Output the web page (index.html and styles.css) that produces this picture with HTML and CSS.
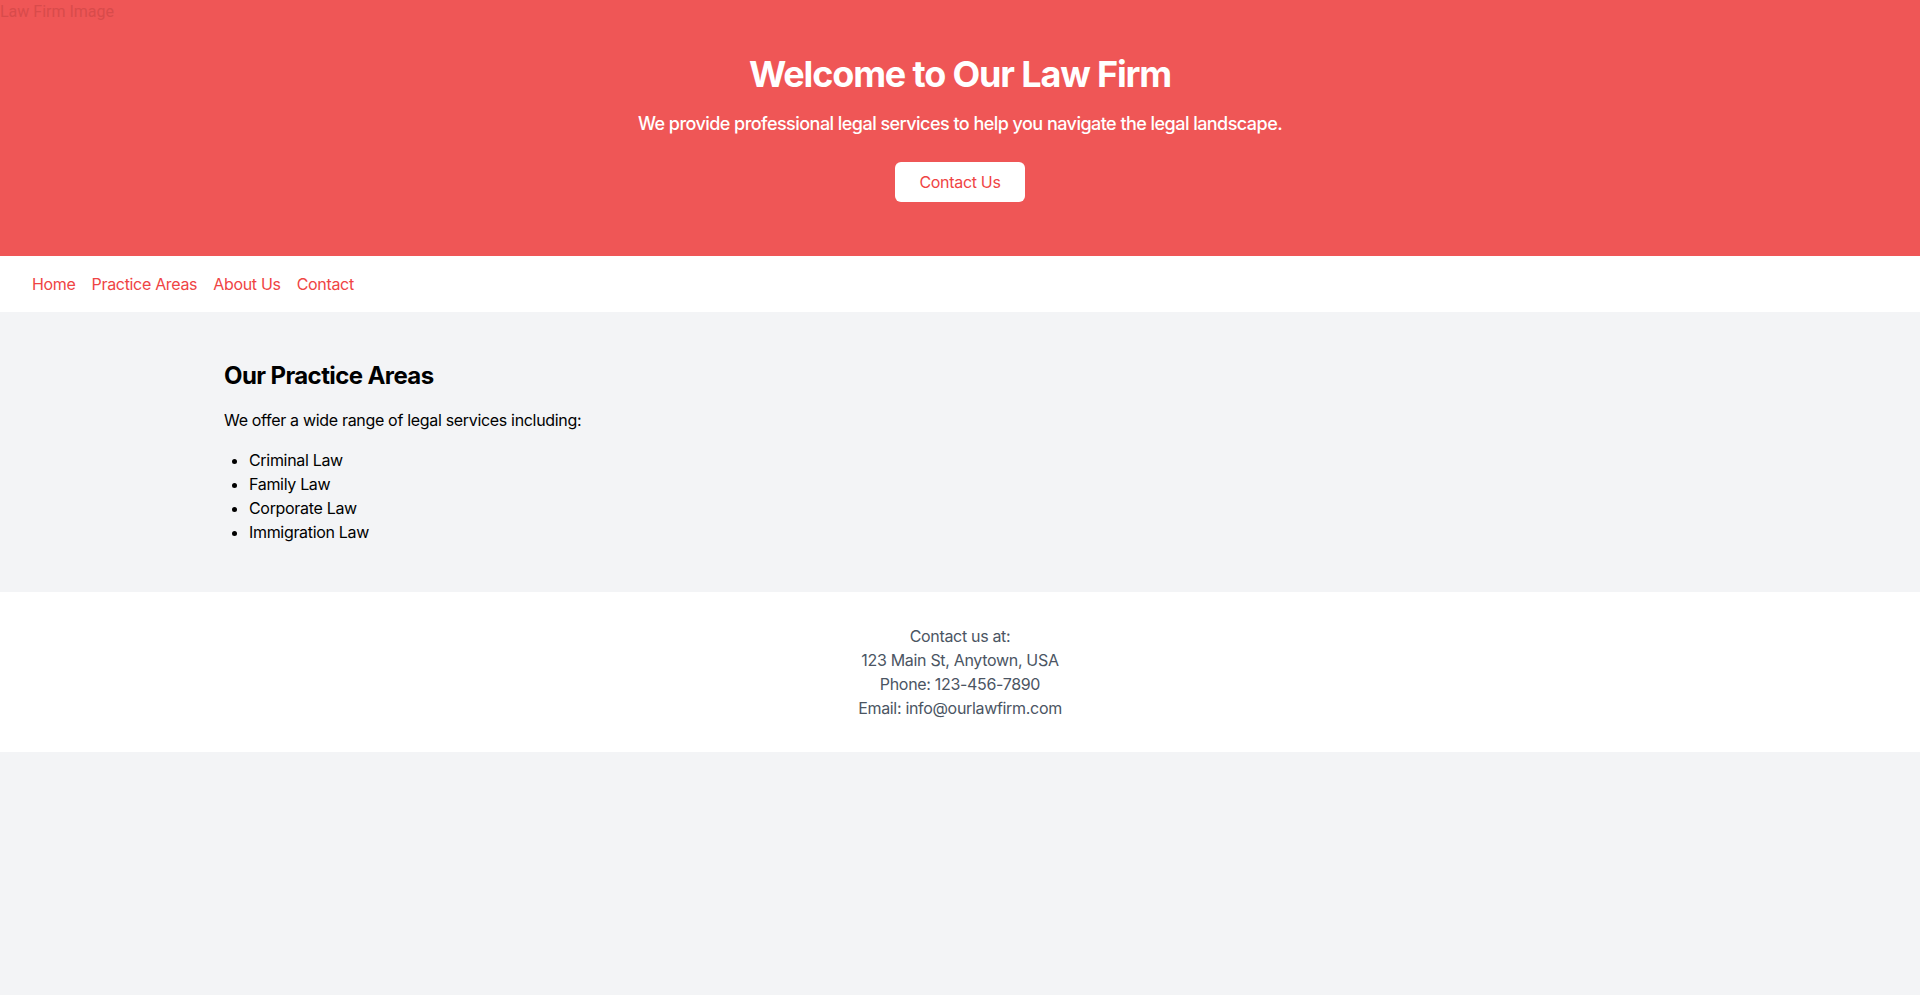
FILE: index.html
```html
<!DOCTYPE html>
<html lang="en">
<head>
<meta charset="utf-8">
<title>Our Law Firm</title>
<link rel="stylesheet" href="styles.css">
</head>
<body>
<header class="hero">
  <span class="hero-alt">Law Firm Image</span>
  <div class="hero-content">
    <h1 class="hero-title">Welcome to Our Law Firm</h1>
    <p class="hero-sub">We provide professional legal services to help you navigate the legal landscape.</p>
    <a class="hero-btn" href="#">Contact Us</a>
  </div>
</header>
<nav class="nav">
  <a href="#">Home</a>
  <a href="#">Practice Areas</a>
  <a href="#">About Us</a>
  <a href="#">Contact</a>
</nav>
<main class="main">
  <div class="container">
    <h2 class="section-title">Our Practice Areas</h2>
    <p class="section-text">We offer a wide range of legal services including:</p>
    <ul class="areas">
      <li>Criminal Law</li>
      <li>Family Law</li>
      <li>Corporate Law</li>
      <li>Immigration Law</li>
    </ul>
  </div>
</main>
<footer class="footer">
  <p>Contact us at:</p>
  <p>123 Main St, Anytown, USA</p>
  <p>Phone: 123-456-7890</p>
  <p>Email: info@ourlawfirm.com</p>
</footer>
</body>
</html>
```
FILE: styles.css
```css
* { box-sizing: border-box; }
html, body { margin: 0; padding: 0; }
body {
  font-family: Inter, "Helvetica Neue", Arial, sans-serif;
  font-size: 16px;
  line-height: 24px;
  letter-spacing: -0.02em;
  color: #000;
  background: #f3f4f6;
  min-height: 995px;
}
p, h1, h2, ul { margin: 0; }
a { text-decoration: none; }

.hero {
  position: relative;
  background: #ef5656;
  padding: 54px 16px;
  text-align: center;
  color: #fff;
}
.hero-alt {
  position: absolute;
  left: 0;
  top: 0;
  line-height: 24px;
  letter-spacing: 0;
  font-family: Roboto, Inter, sans-serif;
  color: #d84b4b;
}
.hero-content {
  display: flex;
  flex-direction: column;
  align-items: center;
}
.hero-title {
  font-size: 36px;
  line-height: 40px;
  font-weight: 700;
  letter-spacing: -0.032em;
  margin-bottom: 16px;
}
.hero-sub {
  font-size: 18px;
  line-height: 28px;
  font-weight: 500;
  letter-spacing: -0.03em;
  margin-bottom: 24px;
}
.hero-btn {
  display: inline-block;
  background: #fff;
  color: #ef4444;
  padding: 8px 24px;
  border-radius: 6px;
  font-size: 16px;
  line-height: 24px;
}

.nav {
  background: #fff;
  display: flex;
  gap: 16px;
  padding: 16px 32px;
}
.nav a { color: #ef4444; }

.main { padding: 48px 0; }
.container {
  max-width: 1536px;
  margin: 0 auto;
  padding: 0 32px;
}
.section-title {
  font-size: 24px;
  line-height: 32px;
  font-weight: 700;
  letter-spacing: -0.025em;
  margin-bottom: 16px;
}
.section-text { margin-bottom: 16px; }
.areas {
  list-style: disc;
  padding-left: 25px;
}

.footer {
  background: #fff;
  padding: 32px 16px;
  text-align: center;
  color: #4b5563;
}
```
